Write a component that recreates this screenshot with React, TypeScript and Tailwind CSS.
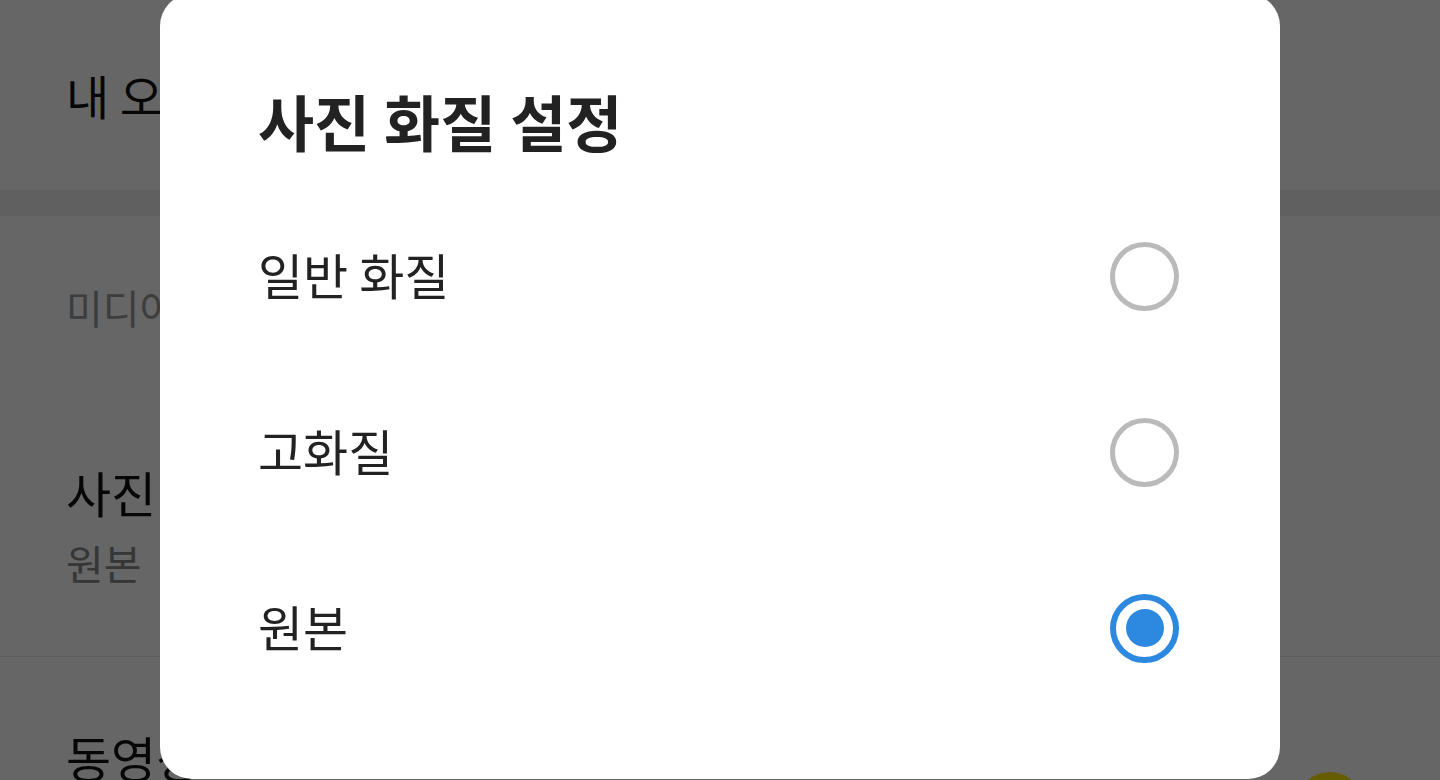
import { useState } from "react";

const font = { fontFamily: '"Noto Sans CJK KR", "Noto Sans", sans-serif' };

const options = ["일반 화질", "고화질", "원본"];

function Radio({ checked }: { checked: boolean }) {
  if (checked) {
    return (
      <div className="w-[69px] h-[69px] rounded-full border-[6px] border-[#2d88e0] flex items-center justify-center">
        <div className="w-[38px] h-[38px] rounded-full bg-[#2d88e0]" />
      </div>
    );
  }
  return <div className="w-[69px] h-[69px] rounded-full border-[5px] border-[#bababa]" />;
}

export default function App() {
  const [selected, setSelected] = useState(2);

  return (
    <div className="relative w-[1440px] h-[780px] overflow-hidden bg-white" style={font}>
      {/* settings page underneath */}
      <div className="flex flex-col">
        <div className="h-[190px] flex items-center px-[66px]">
          <span className="text-[47px] text-[#111]">내 오픈</span>
        </div>
        <div className="h-[26px] bg-[#efefef]" />
        <div className="pt-[63px] px-[66px]">
          <span className="text-[40px] leading-[56px] text-[#9a9a9a]">미디어</span>
        </div>
        <div className="pt-[127px] pb-[66px] px-[66px] border-b border-[#e6e6e6] flex flex-col">
          <span className="text-[49px] leading-[60px] text-[#111]">사진</span>
          <span className="mt-[12px] text-[41px] leading-[56px] text-[#888]">원본</span>
        </div>
        <div className="pt-[70px] pl-[66px] pr-[76px] flex justify-between">
          <span className="text-[49px] leading-[60px] text-[#111]">동영상</span>
          <div className="mt-[45px] w-[68px] h-[68px] rounded-full bg-[#fee500]" />
        </div>
      </div>

      {/* dim */}
      <div className="absolute inset-0 bg-black/60" />

      {/* dialog */}
      <div className="absolute left-[160px] top-[-6px] w-[1120px] h-[785px] rounded-[32px] bg-white flex flex-col pl-[98px] pr-[101px]">
        <div className="mt-[89px] h-[74px] flex items-center">
          <h2 className="text-[61px] font-bold leading-none text-[#222]">사진 화질 설정</h2>
        </div>
        <div className="mt-[31px] flex flex-col">
          {options.map((label, i) => (
            <button
              key={label}
              onClick={() => setSelected(i)}
              className="h-[176px] flex items-center justify-between text-left"
            >
              <span className="pb-[6px] text-[49px] leading-none text-[#222]">{label}</span>
              <Radio checked={selected === i} />
            </button>
          ))}
        </div>
      </div>
    </div>
  );
}
